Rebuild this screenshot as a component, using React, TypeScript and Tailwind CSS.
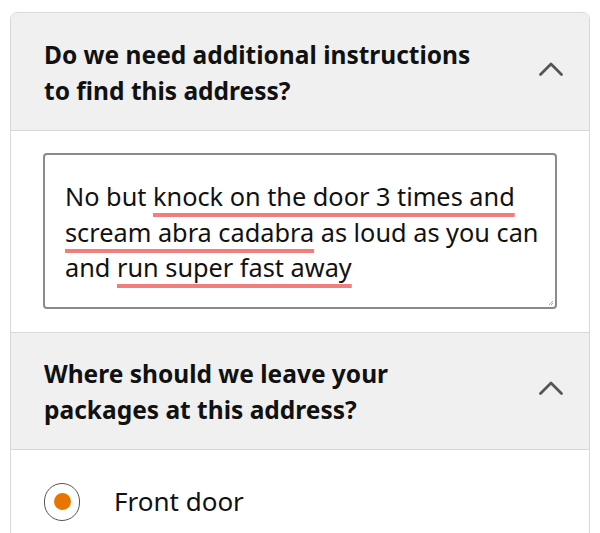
import React from "react";

function Chevron() {
  return (
    <svg width="28" height="18" viewBox="0 0 28 18" fill="none">
      <path d="M3.5 14.5 L14 4 L24.5 14.5" stroke="#555" strokeWidth="2.8" strokeLinecap="round" strokeLinejoin="round" />
    </svg>
  );
}

function Header({ l1, l2, top }: { l1: string; l2: string; top?: boolean }) {
  return (
    <div
      className={`flex items-center justify-between bg-[#f0f0f0] h-[118px] pl-[33px] pr-[24px] border-b border-[#d8d8d8] ${
        top ? "" : "border-t"
      }`}
    >
      <div className="text-[24.5px] leading-[36px] font-bold text-[#111] pt-[2px]">
        <div>{l1}</div>
        <div>{l2}</div>
      </div>
      <div className="mb-[6px]">
        <Chevron />
      </div>
    </div>
  );
}

const ul =
  "underline decoration-[#f27d7d] decoration-[4px] underline-offset-[7px] [text-decoration-skip-ink:none]";

export default function App() {
  return (
    <div
      className="w-[600px] h-[533px] bg-white overflow-hidden pt-[12px] px-[10px]"
      style={{ fontFamily: "'Noto Sans', sans-serif" }}
    >
      <div className="border border-[#d8d8d8] rounded-t-[7px] overflow-hidden h-[540px]">
        <Header top l1="Do we need additional instructions" l2="to find this address?" />
        <div className="h-[201px] pt-[22px] pl-[32px] pr-[32px] bg-white">
          <div className="relative w-[514px] h-[156px] border-2 border-[#8a8a8a] rounded-[4px] pt-[24px] pl-[20px] pr-[6px] text-[25.3px] leading-[35.5px] text-[#111]">
            No but <span className={ul}>knock on the door 3 times and scream abra cadabra</span> as loud as you can and{" "}
            <span className={ul}>run super fast away</span>
            <svg className="absolute right-[1px] bottom-[1px]" width="6" height="6" viewBox="0 0 6 6">
              <path d="M1 5 L5 1 M3 5 L5 3" stroke="#aaa" strokeWidth="1" />
            </svg>
          </div>
        </div>
        <Header l1="Where should we leave your" l2="packages at this address?" />
        <div className="flex items-center pl-[33px] pt-[32px]">
          <div className="w-[36px] h-[38px] rounded-full border-[1.5px] border-[#555] flex items-center justify-center">
            <div className="w-[17px] h-[17px] rounded-full bg-[#e77600]" />
          </div>
          <span className="ml-[34px] text-[26px] text-[#111]">Front door</span>
        </div>
      </div>
    </div>
  );
}
